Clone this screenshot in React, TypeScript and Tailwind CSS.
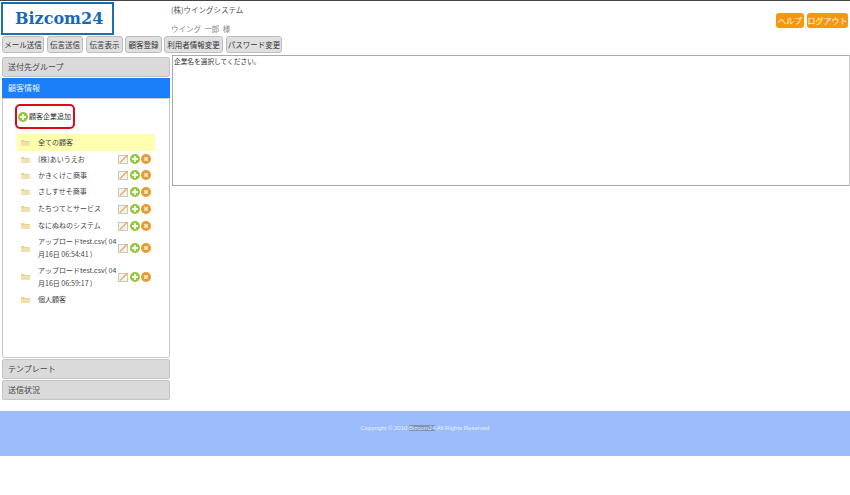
const font = { fontFamily: '"Noto Sans CJK JP", "Liberation Sans", sans-serif' };

function PlusIcon({ size = 10 }: { size?: number }) {
  return (
    <svg width={size} height={size} viewBox="0 0 12 12" className="shrink-0">
      <circle cx="6" cy="6" r="6" fill="#93c83a" />
      <path d="M6 2.6v6.8M2.6 6h6.8" stroke="#fff" strokeWidth="2.4" />
    </svg>
  );
}
function DeleteIcon() {
  return (
    <svg width="10" height="10" viewBox="0 0 12 12" className="shrink-0">
      <circle cx="6" cy="6" r="6" fill="#ea9a30" />
      <path d="M4 4l4 4M8 4l-4 4" stroke="#fdf3e0" strokeWidth="1.8" />
    </svg>
  );
}
function EditIcon() {
  return (
    <svg width="11" height="10" viewBox="0 0 11 10" className="shrink-0">
      <rect x="0.5" y="1.5" width="9" height="8" fill="#f6f3ea" stroke="#c8c8c8" strokeWidth="1" />
      <path d="M2 8.5L9.5 1" stroke="#e0b46c" strokeWidth="1.6" />
    </svg>
  );
}
function FolderIcon() {
  return (
    <svg width="9" height="7" viewBox="0 0 9 7" className="shrink-0">
      <path d="M0 1h3l1 1h5v5H0z" fill="#e6d59a" />
      <rect x="0" y="3" width="9" height="4" fill="#f0e2b0" />
    </svg>
  );
}

const navs = [
  { label: "メール送信", c: "w-[42px]" },
  { label: "伝言送信", c: "w-[36px] ml-[3px]" },
  { label: "伝言表示", c: "w-[37px] ml-[3px]" },
  { label: "顧客登録", c: "w-[37px] ml-[2px]" },
  { label: "利用者情報変更", c: "w-[59px] ml-[2px]" },
  { label: "パスワード変更", c: "w-[56px] ml-[3px]" },
];

const rows: { label: string[]; h: string }[] = [
  { label: ["(株)あいうえお"], h: "h-[16px]" },
  { label: ["かきくけこ商事"], h: "h-[16px]" },
  { label: ["さしすせそ商事"], h: "h-[17px]" },
  { label: ["たちつてとサービス"], h: "h-[17px]" },
  { label: ["なにぬねのシステム"], h: "h-[17px]" },
  { label: ["アップロードtest.csv( 04", "月16日 06:54:41 )"], h: "h-[28px]" },
  { label: ["アップロードtest.csv( 04", "月16日 06:59:17 )"], h: "h-[29px]" },
];

function AccordionHead({ label }: { label: string }) {
  return (
    <div className="h-[20px] flex items-center pl-[5px] bg-[#dadada] border border-[#c4c4c4] rounded-[2px] text-[8px] text-[#444]">
      {label}
    </div>
  );
}

export default function App() {
  return (
    <div style={font} className="w-[850px] h-[495px] bg-white overflow-hidden border-t border-[#444]">
      <div className="flex h-[35px]">
        <div className="ml-[1px] mt-[1px] w-[113px] h-[33px] border-2 border-[#1a6fb5] flex items-center pl-[12px]">
          <span style={{ fontFamily: '"DejaVu Serif", serif' }} className="text-[16px] leading-none font-bold text-[#1569b8]">Bizcom24</span>
        </div>
        <div className="ml-[57px] flex flex-col text-[7.5px] text-[#555]">
          <span className="mt-[3px] leading-[12px]">(株)ウイングシステム</span>
          <span className="mt-[7px] leading-[12px] text-[#888]">ウイング{"\u00a0\u00a0"}一郎{"\u00a0\u00a0"}様</span>
        </div>
        <div className="ml-auto mr-[2px] mt-[12px] flex gap-[3px] text-[8px] text-white">
          <div className="w-[28px] h-[15px] bg-[#f7970f] rounded-[3px] flex items-center justify-center">ヘルプ</div>
          <div className="w-[41px] h-[15px] bg-[#f7970f] rounded-[3px] flex items-center justify-center">ログアウト</div>
        </div>
      </div>
      <div className="flex ml-[2px] h-[19px]">
        {navs.map((n) => (
          <div key={n.label} className={`${n.c} h-[17px] bg-[#e0e0e0] border border-[#bdbdbd] rounded-[3px] flex items-center justify-center text-[7.5px] text-[#333] whitespace-nowrap`}>
            {n.label}
          </div>
        ))}
      </div>
      <div className="flex">
        <div className="ml-[2px] w-[168px] mt-[2px] flex flex-col">
          <AccordionHead label="送付先グループ" />
          <div className="mt-[1px] h-[20px] flex items-center pl-[6px] bg-[#1a7ffb] text-[8px] text-[#e6f0ff]">顧客情報</div>
          <div className="h-[260px] border border-[#c8c8c8] rounded-b-[2px] pt-[5px]">
            <div className="ml-[12px] w-[60px] h-[25px] border-[2px] border-[#dd0a1a] rounded-[5px] flex items-center pl-[1px] gap-[1px] text-[7px] text-[#333]">
              <PlusIcon />
              <span>顧客企業追加</span>
            </div>
            <div className="ml-[14px] mt-[5px] w-[138px] text-[7px] text-[#444]">
              <div className="h-[17px] bg-[#ffffb0] flex items-center pl-[4px] gap-[8px]">
                <FolderIcon />
                <span>全ての顧客</span>
              </div>
              {rows.map((r) => (
                <div key={r.label.join()} className={`${r.h} flex items-center pl-[4px]`}>
                  <FolderIcon />
                  <div className="ml-[8px] w-[80px] leading-[13px]">
                    {r.label.map((l) => (
                      <div key={l} className="whitespace-nowrap">{l}</div>
                    ))}
                  </div>
                  <div className="flex gap-[1px] items-center">
                    <EditIcon />
                    <PlusIcon />
                    <DeleteIcon />
                  </div>
                </div>
              ))}
              <div className="h-[17px] flex items-center pl-[4px] gap-[8px]">
                <FolderIcon />
                <span>個人顧客</span>
              </div>
            </div>
          </div>
          <div className="mt-[1px]"><AccordionHead label="テンプレート" /></div>
          <div className="mt-[1px]"><AccordionHead label="送信状況" /></div>
        </div>
        <div className="ml-[2px] flex-1 h-[131px] border border-[#aaa] border-r-[#ccc] text-[6.7px] text-[#333] leading-[10px] pl-[1px]">
          企業名を選択してください。
        </div>
      </div>
      <div className="mt-[11px] h-[45px] bg-[#9dbcfb] flex justify-center pt-[12px] text-[6px] leading-[11px] text-[#eaf1ff]" style={{ fontFamily: '"Liberation Sans", sans-serif' }}>
        <span>Copyright © 2010 <span className="bg-[#7c93b8]">Bizcom24</span> All Rights Reserved</span>
      </div>
    </div>
  );
}
